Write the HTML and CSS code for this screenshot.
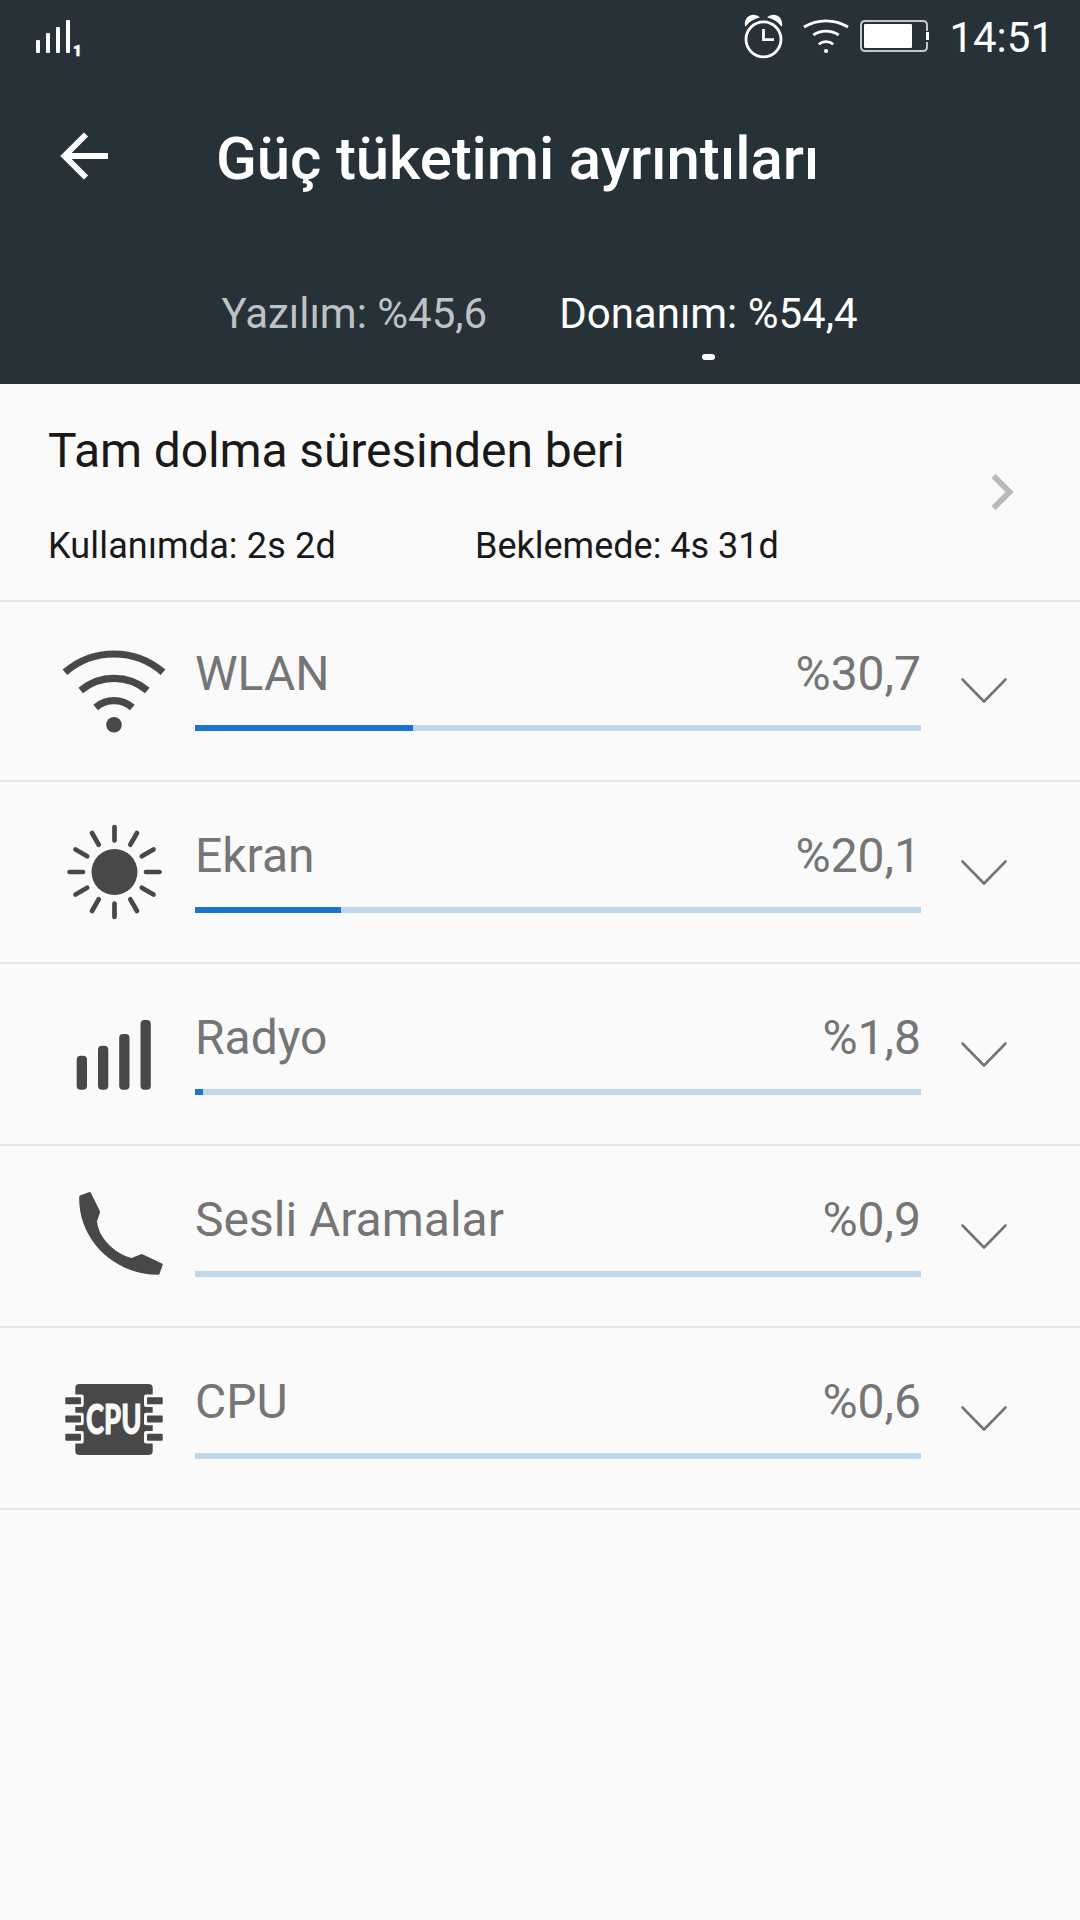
FILE: index.html
```html
<!DOCTYPE html>
<html lang="tr">
<head>
    <meta charset="UTF-8">
    <meta name="viewport" content="width=device-width, initial-scale=1.0">
    <title>Güç tüketimi ayrıntıları</title>
    <link rel="stylesheet" href="styles.css">
</head>
<body>

    <header class="header">
        <div class="status-bar">
            <svg class="signal" width="48" height="72" viewBox="36 0 48 72">
                <rect x="36" y="40" width="4" height="13" rx="1"/>
                <rect x="46" y="33" width="4" height="20" rx="1"/>
                <rect x="56" y="27" width="4" height="26" rx="1"/>
                <rect x="66" y="20" width="4" height="33" rx="1"/>
                <text x="73" y="55.5" class="sim">1</text>
            </svg>
            <div class="status-right">
                <svg width="188" height="72" viewBox="744 0 188 72">
                    <!-- alarm -->
                    <g class="line">
                        <circle cx="763.5" cy="39.3" r="17.5"/>
                        <path d="M763.5 29v10.7h10.5"/>
                    </g>
                    <path d="M745.2 26.7C743.5 20 748 14.700 753.500 14.700Q757.500 14.800 760 17.300Q751 19.500 745.200 26.700ZM781.800 26.700C783.500 20 779 14.700 773.500 14.700Q769.500 14.800 767 17.300Q776 19.500 781.800 26.700Z"/>
                    <!-- wifi -->
                    <g class="line">
                        <path d="M804 27A42 42 0 0 1 848 27"/>
                        <path d="M813.300 35A23 23 0 0 1 838.700 35"/>
                        <path d="M818.800 44.300A11 11 0 0 1 833.200 44.300"/>
                    </g>
                    <circle cx="826" cy="51" r="2.1"/>
                    <!-- battery -->
                    <path class="battery" d="M927 31V25Q927 21 923 21H865Q861 21 861 25V47Q861 51 865 51H923Q927 51 927 47V42"/>
                    <rect x="864" y="24" width="48" height="24" rx="1"/>
                    <rect x="926" y="32" width="3" height="8"/>
                </svg>
                <span class="clock">14:51</span>
            </div>
        </div>

        <div class="title-bar">
            <svg class="back" width="48" height="48" viewBox="0 0 48 48">
                <path d="M26 2.500L4.500 24L26 45.500M5 24H48"/>
            </svg>
            <h1>Güç tüketimi ayrıntıları</h1>
        </div>

        <nav class="tabs">
            <div class="tab">Yazılım: %45,6</div>
            <div class="tab active">Donanım: %54,4</div>
        </nav>
    </header>

    <section class="summary">
        <div class="summary-text">
            <h2>Tam dolma süresinden beri</h2>
            <div class="times">
                <span class="time used">Kullanımda: 2s 2d</span>
                <span class="time">Beklemede: 4s 31d</span>
            </div>
        </div>
        <svg class="next" width="24" height="38" viewBox="0 0 24 38">
            <path d="M2.500 3L18.500 19L2.500 35"/>
        </svg>
    </section>

    <main class="list">
        <div class="row">
            <svg class="icon" width="195" height="180" viewBox="0 0 195 180">
                <g class="arcs">
                    <path d="M65 72.300A74.800 74.800 0 0 1 163 72.300"/>
                    <path d="M80.700 90.500A52 52 0 0 1 147.300 90.500"/>
                    <path d="M95.700 107.500A28 28 0 0 1 132.300 107.500"/>
                </g>
                <circle cx="114" cy="124.700" r="7.800"/>
            </svg>
            <div class="info">
                <div class="label"><span>WLAN</span><span>%30,7</span></div>
                <div class="bar"><div class="fill" style="width: 30%"></div></div>
            </div>
            <svg class="arrow" width="48" height="28" viewBox="0 0 48 28"><path d="M2.500 2.500L24 24.500L45.500 2.500"/></svg>
        </div>

        <div class="row">
            <svg class="icon" width="195" height="180" viewBox="0 0 195 180">
                <circle cx="114.500" cy="90" r="23"/>
                <g class="rays" transform="translate(114.500 90)">
                    <path d="M0-45V-31.500M0 45V31.500M-45 0H-31.500M45 0H31.500"/>
                    <path transform="rotate(30)" d="M0-45V-31.500M0 45V31.500M-45 0H-31.500M45 0H31.500"/>
                    <path transform="rotate(60)" d="M0-45V-31.500M0 45V31.500M-45 0H-31.500M45 0H31.500"/>
                </g>
            </svg>
            <div class="info">
                <div class="label"><span>Ekran</span><span>%20,1</span></div>
                <div class="bar"><div class="fill" style="width: 20.1%"></div></div>
            </div>
            <svg class="arrow" width="48" height="28" viewBox="0 0 48 28"><path d="M2.500 2.500L24 24.500L45.500 2.500"/></svg>
        </div>

        <div class="row">
            <svg class="icon" width="195" height="180" viewBox="0 0 195 180">
                <rect x="76.700" y="91.700" width="10.300" height="34" rx="4"/>
                <rect x="98" y="81.700" width="10.300" height="44" rx="4"/>
                <rect x="119.200" y="70" width="10.300" height="55.700" rx="4"/>
                <rect x="140.500" y="56" width="10.300" height="69.700" rx="4"/>
            </svg>
            <div class="info">
                <div class="label"><span>Radyo</span><span>%1,8</span></div>
                <div class="bar"><div class="fill" style="width: 1.1%"></div></div>
            </div>
            <svg class="arrow" width="48" height="28" viewBox="0 0 48 28"><path d="M2.500 2.500L24 24.500L45.500 2.500"/></svg>
        </div>

        <div class="row">
            <svg class="icon" width="195" height="180" viewBox="0 0 195 180">
                <path d="M80 49.500L89.500 46Q90.500 46 91 47L99.800 65Q100.200 66.500 99.700 67.500L97 75C98 91 114 107.500 131.500 112L141 108.300Q142 108 143 108.500L162 117.500Q163 118.200 162.600 119.200L159.500 128Q159 128.700 158 128.700C114 129 78 93 79.200 51Q79.300 50 80 49.500Z"/>
            </svg>
            <div class="info">
                <div class="label"><span>Sesli Aramalar</span><span>%0,9</span></div>
                <div class="bar"></div>
            </div>
            <svg class="arrow" width="48" height="28" viewBox="0 0 48 28"><path d="M2.500 2.500L24 24.500L45.500 2.500"/></svg>
        </div>

        <div class="row">
            <svg class="icon" width="195" height="180" viewBox="0 0 195 180">
                <rect x="75.300" y="56" width="77.400" height="71" rx="4"/>
                <g class="notch">
                    <rect x="65" y="66.500" width="18.700" height="12.500" rx="2"/>
                    <rect x="65" y="84.700" width="18.700" height="12.500" rx="2"/>
                    <rect x="65" y="103" width="18.700" height="12.500" rx="2"/>
                    <rect x="144" y="66.500" width="18.700" height="12.500" rx="2"/>
                    <rect x="144" y="84.700" width="18.700" height="12.500" rx="2"/>
                    <rect x="144" y="103" width="18.700" height="12.500" rx="2"/>
                </g>
                <rect x="65.300" y="69.300" width="15.700" height="7" rx="1"/>
                <rect x="65.300" y="87.500" width="15.700" height="7" rx="1"/>
                <rect x="65.300" y="105.700" width="15.700" height="7" rx="1"/>
                <rect x="147" y="69.300" width="15.700" height="7" rx="1"/>
                <rect x="147" y="87.500" width="15.700" height="7" rx="1"/>
                <rect x="147" y="105.700" width="15.700" height="7" rx="1"/>
                <text class="chip" x="86" y="105.700" textLength="55.500" lengthAdjust="spacingAndGlyphs">CPU</text>
            </svg>
            <div class="info">
                <div class="label"><span>CPU</span><span>%0,6</span></div>
                <div class="bar"></div>
            </div>
            <svg class="arrow" width="48" height="28" viewBox="0 0 48 28"><path d="M2.500 2.500L24 24.500L45.500 2.500"/></svg>
        </div>
    </main>

</body>
</html>
```

FILE: styles.css
```css
* {
    box-sizing: border-box;
}
body {
    font-family: Roboto, sans-serif;
    background-color: #fafafa;
    color: #191919;
    margin: 0;
    padding: 0;
}
svg {
    display: block;
    flex: none;
}
h1, h2 {
    margin: 0;
}
.header {
    height: 384px;
    background-color: #263237;
    color: white;
}
.status-bar {
    display: flex;
    justify-content: space-between;
    height: 72px;
    padding: 0 26px 0 36px;
    fill: white;
}
.status-right {
    display: flex;
    gap: 17px;
}
.line {
    fill: none;
    stroke: white;
    stroke-width: 2.8;
}
.battery {
    fill: none;
    stroke: #c4c8c9;
    stroke-width: 2;
}
.sim {
    font-size: 15px;
    font-weight: 900;
    stroke: white;
    stroke-width: 0.6;
}
.clock {
    font-size: 42px;
    line-height: 76px;
}
.title-bar {
    display: flex;
    align-items: center;
    gap: 108px;
    height: 168px;
    padding-left: 60px;
}
.back {
    fill: none;
    stroke: white;
    stroke-width: 6;
}
h1 {
    font-size: 60px;
    font-weight: 500;
    line-height: 72px;
    letter-spacing: -0.12px;
    padding-top: 6px;
}
.tabs {
    display: flex;
    justify-content: center;
    gap: 72px;
    padding: 49px 1px 0 0;
}
.tab {
    font-size: 42px;
    line-height: 50px;
    color: #bec2c4;
}
.tab.active {
    color: white;
}
.tab.active::after {
    content: "";
    display: block;
    width: 13px;
    height: 6px;
    margin: 15px auto 0;
    border-radius: 3px;
    background-color: white;
}
.summary {
    display: flex;
    justify-content: space-between;
    align-items: center;
    height: 218px;
    padding: 0 65px 0 48px;
    border-bottom: 2px solid #e6e6e6;
}
.summary-text {
    padding-top: 5px;
}
h2 {
    font-size: 48px;
    font-weight: 400;
    line-height: 56px;
    letter-spacing: -0.1px;
}
.times {
    display: flex;
    margin-top: 46px;
    font-size: 36px;
    line-height: 42px;
}
.time {
    width: 427px;
}
.time.used {
    letter-spacing: 0.15px;
}
.next {
    fill: none;
    stroke: #bababa;
    stroke-width: 6;
}
.list {
    margin-top: -2px;
}
.row {
    display: flex;
    height: 182px;
    border-bottom: 2px solid #e6e6e6;
}
.icon {
    fill: #484848;
}
.arcs, .rays {
    fill: none;
    stroke: #484848;
    stroke-width: 7.2;
}
.rays {
    stroke-width: 4.7;
    stroke-linecap: round;
}
.notch, .chip {
    fill: #fafafa;
}
.chip {
    font-family: Lato, sans-serif;
    font-size: 41px;
    font-weight: 900;
    stroke: #fafafa;
    stroke-width: 1;
}
.info {
    width: 726px;
    padding-top: 46px;
}
.label {
    display: flex;
    justify-content: space-between;
    font-size: 48px;
    line-height: 56px;
    color: #757575;
}
.bar {
    height: 6px;
    margin-top: 23px;
    background-color: #bfd7ea;
}
.fill {
    height: 100%;
    background-color: #1a73cc;
}
.arrow {
    margin: 77px 0 0 39px;
    fill: none;
    stroke: #757575;
    stroke-width: 2.6;
    stroke-linecap: round;
    stroke-linejoin: round;
}
```
